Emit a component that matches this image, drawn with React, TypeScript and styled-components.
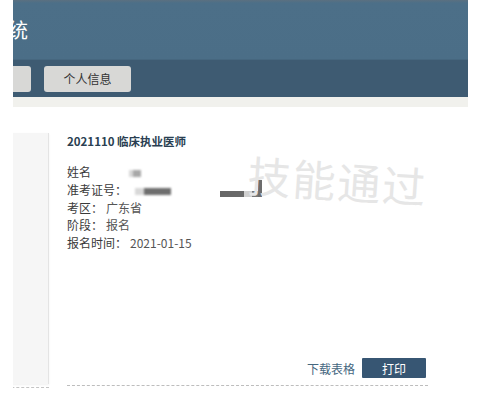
import React from 'react';
import styled, { createGlobalStyle } from 'styled-components';

const Global = createGlobalStyle`
	html, body {
		margin: 0;
		padding: 0;
		background: #fff;
	}
	body {
		font-family: "Noto Sans CJK SC", "Noto Sans", "Liberation Sans", sans-serif;
		color: #333;
	}
`;

const Frame = styled.div`
	width: 480px;
	height: 393px;
	padding: 0 12px 0 13px;
	box-sizing: border-box;
	background: #fff;
`;

// the screenshot is a crop of a wider page: this clips it
const Clip = styled.div`
	width: 455px;
	height: 393px;
	overflow: hidden;
`;

const Page = styled.div`
	width: 655px;
	margin-left: -200px;
`;

const Header = styled.header`
	display: flex;
	flex-direction: column;
`;

const TitleBar = styled.div`
	height: 60px;
	display: flex;
	align-items: center;
	padding-left: 15px;
	background: linear-gradient(#5b7080 0, #4c6f88 3px, #4b6e87 100%);
	border-bottom: 1px solid #46677f;
	box-sizing: border-box;
`;

const Title = styled.h1`
	margin: 0;
	font-size: 20px;
	font-weight: 400;
	color: #fff;
`;

const Nav = styled.nav`
	height: 37px;
	display: flex;
	align-items: center;
	gap: 13px;
	padding-left: 31px;
	background: #3e5b72;
`;

const NavButton = styled.button`
	width: 87px;
	height: 26px;
	border: none;
	border-radius: 3px;
	background: #d8d8d6;
	color: #333;
	font: inherit;
	font-size: 12px;
	cursor: pointer;
`;

const Strip = styled.div`
	height: 10px;
	background: #f1f1ed;
`;

const Content = styled.div`
	display: flex;
	gap: 18px;
	padding: 25px 40px 0 40px;
`;

const SideColumn = styled.div`
	width: 196px;
	padding-bottom: 3px;
	border-bottom: 1px dashed #c4c4c4;
`;

const SidePanel = styled.div`
	height: 251px;
	margin-top: 1px;
	background: #f6f6f6;
	border-right: 1px solid #e4e4e4;
	box-shadow: 0 1px 2px rgba(0, 0, 0, 0.06);
`;

const Main = styled.div`
	position: relative;
	flex: 1;
	height: 254px;
	display: flex;
	flex-direction: column;
	padding-right: 2px;
	border-bottom: 1px dashed #bdbdbd;
	box-sizing: border-box;
`;

const ExamTitle = styled.div`
	font-size: 11.5px;
	font-weight: 700;
	line-height: 18px;
	color: #2a3f52;
`;

const InfoList = styled.div`
	margin-top: 13px;
	display: flex;
	flex-direction: column;
`;

const Row = styled.div`
	font-size: 12px;
	line-height: 17.8px;
	color: #3a3a3a;
	white-space: nowrap;
`;

const Value = styled.span<{ $gap?: number }>`
	margin-left: ${p => p.$gap ?? 3}px;
	color: #555;
`;

const Blur = styled.span<{ $w: number; $light?: number; $dark?: string }>`
	display: inline-block;
	vertical-align: middle;
	width: ${p => p.$w}px;
	height: 7px;
	background: linear-gradient(
		90deg,
		#d8d8d8 0,
		#d8d8d8 ${p => p.$light ?? 40}%,
		${p => p.$dark ?? '#6e6e6e'} ${p => p.$light ?? 40}%,
		${p => p.$dark ?? '#6e6e6e'} 100%
	);
	filter: blur(0.8px);
`;

const Redaction = styled.div`
	position: absolute;
	left: 153px;
	top: 48px;
	width: 44px;
	height: 20px;
`;

const RedactBar = styled.div`
	position: absolute;
	left: 0;
	bottom: 3px;
	width: 40px;
	height: 6px;
	background: linear-gradient(90deg, #666 0, #6a6a6a 60%, #d0d0d0 60%, #cfcfcf 80%, #777 80%);
	filter: blur(0.7px);
`;

const RedactHook = styled.div`
	position: absolute;
	right: 2px;
	top: 0;
	width: 4px;
	height: 17px;
	background: #6d6d6d;
	filter: blur(0.6px);
`;

const Watermark = styled.div`
	position: absolute;
	left: 181px;
	top: 10px;
	font-size: 43px;
	font-weight: 400;
	letter-spacing: 2px;
	color: #e6e6e6;
	transform: rotate(4deg);
	transform-origin: left center;
	pointer-events: none;
	white-space: nowrap;
`;

const Actions = styled.div`
	margin-top: auto;
	padding-bottom: 7px;
	display: flex;
	justify-content: flex-end;
	align-items: center;
	gap: 7px;
`;

const LinkText = styled.a`
	font-size: 12px;
	color: #46677f;
	text-decoration: none;
	cursor: pointer;
`;

const PrintButton = styled.button`
	width: 64px;
	height: 20px;
	border: none;
	border-radius: 1px;
	background: #375673;
	color: #fff;
	font: inherit;
	font-size: 12px;
	cursor: pointer;
`;

export default (): JSX.Element => {
	const navItems = ['首页', '报名信息', '个人信息'];
	return (
		<Frame>
			<Global />
			<Clip>
				<Page>
					<Header>
						<TitleBar>
							<Title>医师资格考试报名系统</Title>
						</TitleBar>
						<Nav>
							{navItems.map(item => (
								<NavButton key={item}>{item}</NavButton>
							))}
						</Nav>
						<Strip />
					</Header>
					<Content>
						<SideColumn>
							<SidePanel />
						</SideColumn>
						<Main>
							<ExamTitle>2021110 临床执业医师</ExamTitle>
							<InfoList>
								<Row>
									姓名
									<Value $gap={38}>
										<Blur $w={12} $light={35} $dark="#a8a8a8" />
									</Value>
								</Row>
								<Row>
									准考证号：
									<Value $gap={8}>
										<Blur $w={36} $light={25} />
									</Value>
								</Row>
								<Row>
									考区：<Value>广东省</Value>
								</Row>
								<Row>
									阶段：<Value>报名</Value>
								</Row>
								<Row>
									报名时间：<Value>2021-01-15</Value>
								</Row>
							</InfoList>
							<Redaction>
								<RedactBar />
								<RedactHook />
							</Redaction>
							<Watermark>技能通过</Watermark>
							<Actions>
								<LinkText>下载表格</LinkText>
								<PrintButton>打印</PrintButton>
							</Actions>
						</Main>
					</Content>
				</Page>
			</Clip>
		</Frame>
	);
};
